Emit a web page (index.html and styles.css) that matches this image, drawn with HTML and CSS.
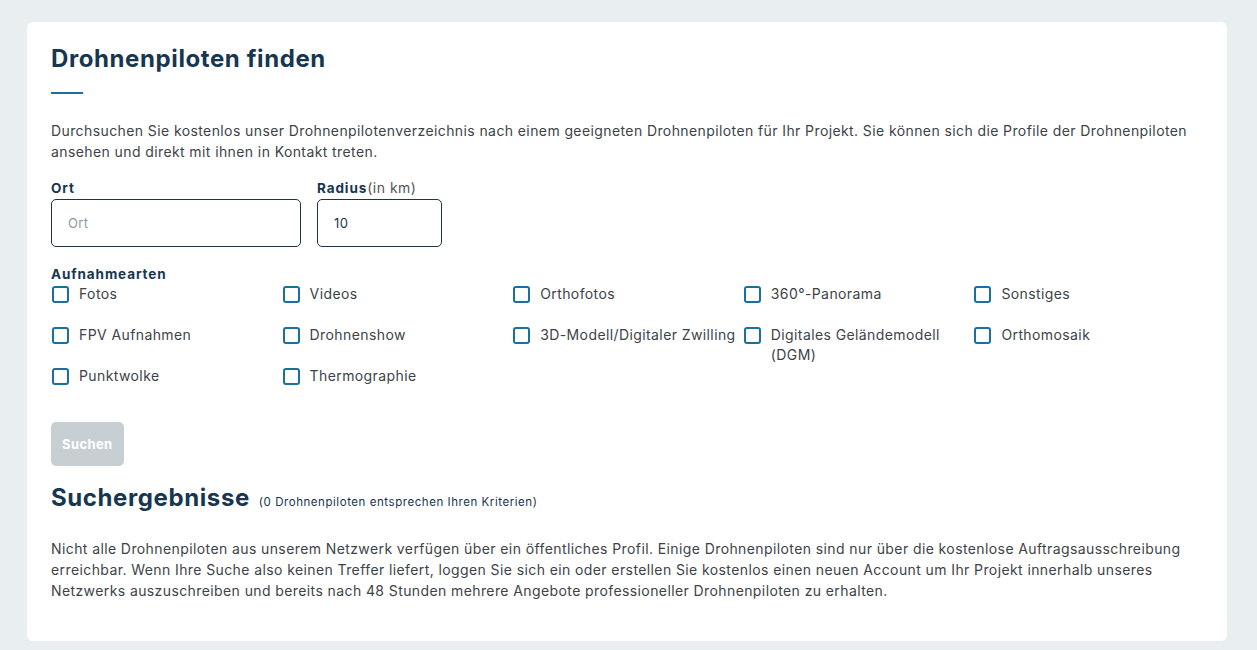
FILE: index.html
```html
<!DOCTYPE html>
<html lang="de">

<head>
    <meta charset="UTF-8">
    <meta name="viewport" content="width=device-width, initial-scale=1.0">
    <title>Drohnenpiloten finden</title>
    <link rel="stylesheet" href="styles.css">
</head>

<body>
    <div class="card">
        <h1>Drohnenpiloten finden</h1>
        <div class="divider"></div>
        <p class="intro">Durchsuchen Sie kostenlos unser Drohnenpilotenverzeichnis nach einem geeigneten Drohnenpiloten für Ihr Projekt. Sie können sich die Profile der Drohnenpiloten ansehen und direkt mit ihnen in Kontakt treten.</p>

        <form id="search-form">
            <div class="fields">
                <div class="field field-ort">
                    <label for="ort">Ort</label>
                    <input type="text" id="ort" name="ort" placeholder="Ort">
                </div>
                <div class="field field-radius">
                    <label for="radius">Radius<span class="hint">(in km)</span></label>
                    <input type="text" id="radius" name="radius" value="10">
                </div>
            </div>

            <div class="group-label">Aufnahmearten</div>
            <div class="types">
                <label class="check"><input type="checkbox"><span>Fotos</span></label>
                <label class="check"><input type="checkbox"><span>Videos</span></label>
                <label class="check"><input type="checkbox"><span>Orthofotos</span></label>
                <label class="check"><input type="checkbox"><span>360°-Panorama</span></label>
                <label class="check"><input type="checkbox"><span>Sonstiges</span></label>
                <label class="check"><input type="checkbox"><span>FPV Aufnahmen</span></label>
                <label class="check"><input type="checkbox"><span>Drohnenshow</span></label>
                <label class="check"><input type="checkbox"><span>3D-Modell/Digitaler Zwilling</span></label>
                <label class="check"><input type="checkbox"><span>Digitales Geländemodell (DGM)</span></label>
                <label class="check"><input type="checkbox"><span>Orthomosaik</span></label>
                <label class="check"><input type="checkbox"><span>Punktwolke</span></label>
                <label class="check"><input type="checkbox"><span>Thermographie</span></label>
            </div>

            <button type="button" class="btn-search" disabled>Suchen</button>
        </form>

        <div class="results-head">
            <h2>Suchergebnisse</h2>
            <span class="count">(0 Drohnenpiloten entsprechen Ihren Kriterien)</span>
        </div>
        <p class="note">Nicht alle Drohnenpiloten aus unserem Netzwerk verfügen über ein öffentliches Profil. Einige Drohnenpiloten sind nur über die kostenlose Auftragsausschreibung erreichbar. Wenn Ihre Suche also keinen Treffer liefert, loggen Sie sich ein oder erstellen Sie kostenlos einen neuen Account um Ihr Projekt innerhalb unseres Netzwerks auszuschreiben und bereits nach 48 Stunden mehrere Angebote professioneller Drohnenpiloten zu erhalten.</p>
    </div>
</body>

</html>
```

FILE: styles.css
```css
body {
    margin: 0;
    padding: 22px 30px 10px 27px;
    background-color: #e9eef1;
    font-family: Inter, "Noto Sans", sans-serif;
    color: #3d4348;
}

.card {
    background-color: #fff;
    border-radius: 6px;
    padding: 22px 24px 40px;
}

h1 {
    margin: 0;
    font-size: 24px;
    line-height: 30px;
    font-weight: 700;
    color: #173650;
    letter-spacing: 0.6px;
}

.divider {
    width: 32px;
    height: 2px;
    margin: 18px 0 26px;
    background-color: #1a6f9c;
}

.intro,
.note {
    margin: 0;
    font-size: 14px;
    line-height: 21px;
    letter-spacing: 0.4px;
}

form {
    margin-top: 18px;
}

.fields {
    display: flex;
    gap: 16px;
}

.field label,
.group-label {
    display: block;
    font-size: 13.5px;
    line-height: 16px;
    font-weight: 700;
    color: #173650;
    letter-spacing: 0.9px;
}

.hint {
    font-weight: 400;
    font-size: 14px;
    color: #555;
    letter-spacing: 0.5px;
}

.field input {
    box-sizing: border-box;
    height: 48px;
    margin-top: 3px;
    padding: 0 16px;
    border: 1px solid #1d3447;
    border-radius: 5px;
    font-family: inherit;
    font-size: 13px;
    letter-spacing: 0.4px;
    color: #173650;
}

.field input::placeholder {
    color: #8a9aa6;
}

.field-ort input {
    width: 250px;
}

.field-radius input {
    width: 125px;
}

.group-label {
    margin-top: 19px;
}

.types {
    display: grid;
    grid-template-columns: repeat(5, 1fr);
    width: 1153px;
    margin-top: 2px;
}

.check {
    display: flex;
    align-items: flex-start;
    gap: 10px;
    min-height: 41px;
    font-size: 14px;
    line-height: 20px;
    color: #3d4348;
    letter-spacing: 0.4px;
}

.check input {
    appearance: none;
    flex: none;
    width: 17px;
    height: 17px;
    margin: 2px 0 0 1px;
    border: 2px solid #1a6f9c;
    border-radius: 3px;
    box-sizing: border-box;
}

.btn-search {
    margin-top: 15px;
    padding: 0 11px;
    height: 44px;
    border: none;
    border-radius: 5px;
    background-color: #c8cfd2;
    color: #fff;
    font-family: inherit;
    font-size: 13px;
    font-weight: 700;
    letter-spacing: 0.4px;
}

.results-head {
    display: flex;
    align-items: baseline;
    gap: 9px;
    margin-top: 16px;
}

h2 {
    margin: 0;
    font-size: 24px;
    line-height: 32px;
    font-weight: 700;
    color: #173650;
    letter-spacing: 0.6px;
}

.count {
    font-size: 11.5px;
    color: #173650;
    letter-spacing: 0.55px;
}

.note {
    margin-top: 24px;
}
```
